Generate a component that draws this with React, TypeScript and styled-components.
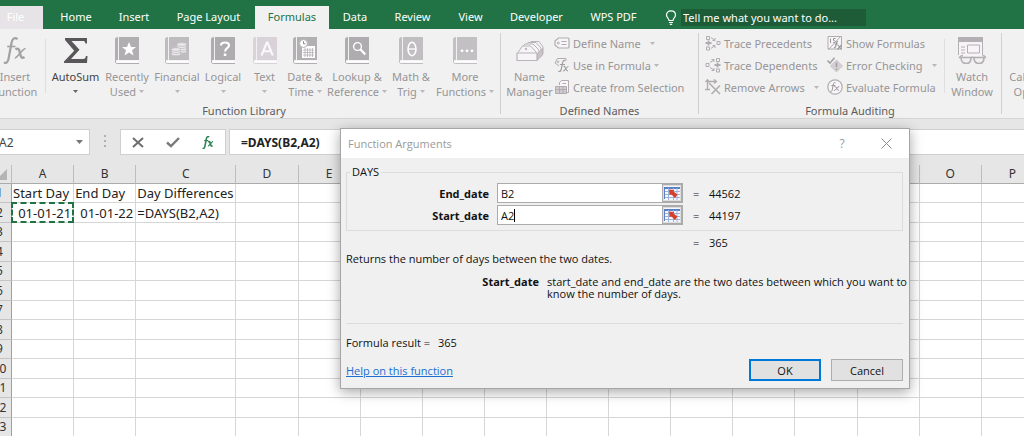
import React from "react";
import styled, { createGlobalStyle } from "styled-components";

const UI_FONT = '"Noto Sans", "Open Sans", sans-serif';
const DIALOG_FONT = '"Open Sans", "Noto Sans", sans-serif';

const GlobalStyle = createGlobalStyle`
  *, *::before, *::after { box-sizing: border-box; }
  body {
    margin: 0;
    overflow: hidden;
    background: #e6e6e6;
    font-family: ${UI_FONT};
    font-size: 11px;
  }
  button, input { font: inherit; color: inherit; margin: 0; padding: 0; border: 0; background: none; }
`;

/* The window is scrolled a little past its left edge. */
const Shell = styled.div`
  position: relative;
  margin-left: -12px;
  min-height: 100vh;
  display: flex;
  flex-direction: column;
`;

/* ---------- Tab bar ---------- */

const TabBar = styled.nav`
  display: flex;
  align-items: flex-end;
  height: 29px;
  background: #217346;
`;

const Tab = styled.button<{ $width: number; $kind?: "file" | "active" }>`
  flex: none;
  width: ${(p) => p.$width}px;
  height: 23px;
  && { padding-bottom: 2px; }
  line-height: 21px;
  white-space: nowrap;
  color: ${(p) => (p.$kind === "active" ? "#217346" : "#fff")};
  && {
    background: ${(p) =>
      p.$kind === "active" ? "#f1f1f1" : p.$kind === "file" ? "#e6e4e6" : "transparent"};
    margin-right: ${(p) => (p.$kind === "file" ? 3 : 0)}px;
  }
`;

const TellMe = styled.label`
  display: flex;
  align-items: center;
  gap: 4px;
  height: 23px;
  padding-left: 14px;
  color: #fff;
`;

const TellMeInput = styled.input`
  width: 185px;
  height: 17px;
  && { padding-left: 2px; background: #1e5c38; }
  outline: none;
  &::placeholder { color: #fff; opacity: 1; }
`;

/* ---------- Ribbon ---------- */

const Ribbon = styled.div`
  display: flex;
  height: 90px;
  background: #f1f1f1;
  border-bottom: 1px solid #d5d5d5;
  overflow: hidden;
`;

const Group = styled.section<{ $width: number }>`
  flex: none;
  width: ${(p) => p.$width}px;
  display: flex;
  flex-direction: column;
`;

const GroupBody = styled.div<{ $left?: number }>`
  display: flex;
  height: 74px;
  padding-left: ${(p) => p.$left ?? 0}px;
`;

const GroupLabel = styled.div`
  height: 15px;
  line-height: 15px;
  text-align: center;
  color: #5c5c5c;
`;

const Divider = styled.div<{ $inner?: boolean; $gap?: number }>`
  flex: none;
  width: 1px;
  margin: ${(p) => (p.$inner ? "10px" : "4px")} ${(p) => p.$gap ?? 0}px
    ${(p) => (p.$inner ? "10px" : "4px")};
  background: ${(p) => (p.$inner ? "#dedede" : "#d0d0d0")};
`;

const Big = styled.button<{ $width: number; $on?: boolean }>`
  flex: none;
  width: ${(p) => p.$width}px;
  display: flex;
  flex-direction: column;
  align-items: center;
  && { padding-top: 8px; }
  color: ${(p) => (p.$on ? "#444" : "#979597")};
  line-height: 15px;
  white-space: nowrap;
  svg.icon { flex: none; margin-bottom: 5px; }
`;

const Line = styled.span`
  display: flex;
  align-items: center;
  justify-content: center;
  gap: 3px;
  height: 15px;
`;

const SmallColumn = styled.div<{ $width: number }>`
  flex: none;
  width: ${(p) => p.$width}px;
  display: flex;
  flex-direction: column;
  padding-top: 3px;
`;

const Small = styled.button`
  display: flex;
  align-items: center;
  height: 22px;
  gap: 3px;
  color: #979597;
  white-space: nowrap;
`;

const CaretSvg = styled.svg<{ $gap?: number }>`
  flex: none;
  margin-left: ${(p) => p.$gap ?? 0}px;
`;

const Caret = ({ color = "#b9b7b9", gap }: { color?: string; gap?: number }) => (
  <CaretSvg $gap={gap} width="5" height="3" viewBox="0 0 5 3">
    <path d="M0 0H5L2.5 3Z" fill={color} />
  </CaretSvg>
);

/* ---------- Icons ---------- */

const Book = ({ color, children }: { color: string; children: React.ReactNode }) => (
  <svg className="icon" width="24" height="27" viewBox="0 0 24 27" fill="none">
    <path d="M3 0C1 0 0 1 0 2.5V24.500C0 23.500 1 22.800 3 22.800Z" fill={color} />
    <path d="M4 0H24V23H4Z" fill={color} />
    <path d="M1 25.200C1 24 2 23.800 3.500 23.800H23.500V25.600H1.500Z" fill="#fff" />
    <path d="M.5 23V25C.5 26 1.200 26.500 2.200 26.500H24" stroke={color} />
    {children}
  </svg>
);

const StarBook = () => (
  <Book color="#b1aeb1">
    <path d="M14 5L16 10H21L17 13.300L18.500 18.500L14 15.400L9.500 18.500L11 13.300L7 10H12Z" fill="#fff" />
  </Book>
);

const CoinsBook = () => (
  <Book color="#bfbcbf">
    <g fill="#ebe8eb" stroke="#bfbcbf" strokeWidth=".8">
      <path d="M12 7.500V15C12 16.500 21.500 16.500 21.500 15V7.500Z" />
      <ellipse cx="16.750" cy="7.500" rx="4.750" ry="1.900" />
      <path d="M12 10C13 12 20.500 12 21.500 10M12 12.500C13 14.500 20.500 14.500 21.500 12.500" fill="none" />
      <path d="M6.500 12.500V17.500C6.500 19.200 15.500 19.200 15.500 17.500V12.500Z" />
      <ellipse cx="11" cy="12.500" rx="4.500" ry="1.900" />
      <path d="M6.500 15C7.500 17 14.500 17 15.500 15" fill="none" />
    </g>
  </Book>
);

const QuestionBook = () => (
  <Book color="#aeacae">
    <path d="M10 8.500C10 4.500 18 4.500 18 8.500C18 11.200 14 11 14 14.500" stroke="#fff" strokeWidth="2.200" />
    <path d="M12.800 16.500H15.300V19H12.800Z" fill="#fff" />
  </Book>
);

const LetterBook = () => (
  <Book color="#d9d3d9">
    <path d="M8.500 18.500L13.800 5.500H14.500L19.800 18.500M10.500 14.200H18" stroke="#fbf8fb" strokeWidth="2" />
  </Book>
);

const CalendarBook = () => (
  <Book color="#b3b0b3">
    <path d="M9 9H22V21H9Z" fill="#fff" />
    <path d="M10 13H21M10 15.500H21M10 18H21M12 11V20M14.500 11V20M17 11V20M19.500 11V20" stroke="#b3b0b3" strokeWidth=".8" />
    <circle cx="10.500" cy="6.500" r="4" fill="#fff" stroke="#b3b0b3" />
    <path d="M10.500 4.200V6.800H12.500" stroke="#8d8b8d" />
  </Book>
);

const SearchBook = () => (
  <Book color="#aeacae">
    <circle cx="12.500" cy="9.500" r="3.900" stroke="#fff" strokeWidth="1.400" />
    <path d="M15.300 12.300L20.300 17.500" stroke="#fff" strokeWidth="2.200" />
  </Book>
);

const ThetaBook = () => (
  <Book color="#c1bec1">
    <ellipse cx="13" cy="12" rx="4" ry="6.700" stroke="#fff" strokeWidth="1.500" />
    <path d="M9 12H17" stroke="#fff" strokeWidth="1.300" />
  </Book>
);

const DotsBook = () => (
  <Book color="#c3c0c3">
    <g fill="#fff">
      <circle cx="9" cy="13.800" r="1.400" />
      <circle cx="14" cy="13.800" r="1.400" />
      <circle cx="19" cy="13.800" r="1.400" />
    </g>
  </Book>
);

const FxGlyph = ({
  color,
  width,
  height,
  bold = 0,
}: {
  color: string;
  width: number;
  height: number;
  bold?: number;
}) => (
  <svg className="icon" width={width} height={height} viewBox="0 0 24 27" fill="none" stroke={color}>
    <path d="M14.500 2.200C11.500-.3 9.200 2.200 8.500 6L5.600 21.500C5 25 3 27 1 25.200" strokeWidth={2.2 + bold} />
    <path d="M4.200 9.500H12.500" strokeWidth={1.6 + bold} />
    <path d="M12.500 12.500C15 10.500 16 12 16.800 15.500C17.800 20 18.500 22 21.500 20" strokeWidth={2.4 + bold} />
    <path d="M22.500 11.800C19.500 11 14.500 21.500 11.800 21" strokeWidth={1.6 + bold} />
  </svg>
);

const Sigma = () => (
  <svg className="icon" width="24" height="27" viewBox="0 0 24 27">
    <path d="M1 1H23V6.500H21.500C21 4.500 20.500 4 18.500 4H7.500L15.500 12.800L7 22H19C21 22 21.500 21 22 19H23.500L23 26H0V24.500L10.200 13.700L1 3Z" fill="#595759" />
  </svg>
);

const NameManagerIcon = () => (
  <svg className="icon" width="28" height="27" viewBox="0 0 28 27" fill="#f7f4f7" stroke="#b8b4b8">
    <path d="M11 9L15 4.500H23L27 10V17L24 20" />
    <path d="M8 10L12 5.500H20L25 11V19" />
    <path d="M5 11L9 7H17L23 13V20" />
    <path d="M2 15.500L6.500 9H14.500L20.500 15.500" />
    <circle cx="10" cy="12" r=".8" fill="#b5b1b5" />
    <path d="M1 16H21V23.500H1Z" strokeWidth="1.200" />
    <path d="M21.500 16.500L26.500 11.500V18L21.500 23Z" fill="#c8c4c8" />
  </svg>
);

const WatchIcon = () => (
  <svg className="icon" width="28" height="27" viewBox="0 0 28 27" fill="none" stroke="#b3afb3">
    <path d="M1 1H24V19H1Z" fill="#f7f3f7" stroke="none" />
    <path d="M.5 5V18M24.500 5V18" />
    <path d="M0 0H25V5H0Z" fill="#b3afb3" stroke="none" />
    <path d="M9.500 8H21.500V16H9.500ZM3 10H7M3 13H7M3 16H7" />
    <path d="M5 18.500C2.500 18.500 2 20 1 21M24.500 18.500C27 18.500 27 20 28 21" strokeWidth="1.600" />
    <path d="M3 20.500H13C13 24.500 11.500 26.500 8.500 26.500C5 26.500 3 24.500 3 20.500ZM16 20.500H26C26 24.500 24 26.500 21 26.500C17.500 26.500 16 24.500 16 20.500Z" fill="#f1f1f1" strokeWidth="1.600" />
    <path d="M12.500 21Q14.500 19.500 16.500 21" strokeWidth="1.600" />
  </svg>
);

const SmallSvg = ({ children }: { children: React.ReactNode }) => (
  <svg width="16" height="16" viewBox="0 0 16 16" fill="none" stroke="#b0acb0">
    {children}
  </svg>
);

const TagIcon = () => (
  <SmallSvg>
    <path d="M4.500 3H14C14.800 3 15 3.300 15 4V12C15 12.700 14.800 13 14 13H4.500L1 10V6Z" fill="#f8f5f8" strokeWidth="1.200" />
    <circle cx="4.300" cy="8" r="1" />
    <path d="M7.500 6.500H12.500M7.500 9.500H12.500" />
  </SmallSvg>
);

const TagFxIcon = () => (
  <SmallSvg>
    <path d="M5 9L1 6L3.500 1.500H12V3.500" />
    <circle cx="4" cy="4.800" r=".8" />
    <path d="M11.500 4C9.500 2.500 8.800 4.500 8.500 6.500L7.200 12.500C6.800 14.500 5.500 15 4.500 14M5.800 7.500H11" stroke="#a19da1" strokeWidth="1.200" />
    <path d="M9.500 9.500C12 8.500 11.500 14.500 14 13.800M14.500 9.500C12.500 9 11 14.500 9 14" stroke="#a19da1" strokeWidth="1.100" />
  </SmallSvg>
);

const SelectionIcon = () => (
  <SmallSvg>
    <path d="M5.500 6V3.500L7.500 1.500H14.500V13.500H12" fill="#f8f5f8" />
    <path d="M8.500 4.500H12" />
    <path d="M1.500 7.500H12.500V14.500H1.500Z" fill="#cfcbcf" />
    <path d="M1.500 10.500H12.500M5.500 7.500V14.500M9 7.500V14.500" />
  </SmallSvg>
);

const PrecedentsIcon = () => (
  <SmallSvg>
    <path d="M1.500 1.500H4.500V4.500H1.500ZM1.500 12H4.500V15H1.500ZM12 6.500H15V9.500H12Z" />
    <path d="M.5 8H6.500M3.500 5.500V10.500" strokeWidth="1.800" />
    <path d="M6 2.500L10 5.500M10 3V5.500H7.500M6 13.500L10 10.500M7.500 10.500H10V13" />
  </SmallSvg>
);

const DependentsIcon = () => (
  <SmallSvg>
    <path d="M11.500 1.500H14.500V4.500H11.500ZM11.500 12H14.500V15H11.500ZM1 6.500H4V9.500H1Z" />
    <path d="M9.500 8H15.500M12.500 5.500V10.500" strokeWidth="1.800" />
    <path d="M5 5.500L9 3M6.500 2.500H9V5M5 10.500L9 13M9 11V13.500H6.500" />
  </SmallSvg>
);

const RemoveArrowsIcon = () => (
  <SmallSvg>
    <path d="M2.500 0V11M.5 3L2.500 .8L4.500 3M0 10.500H5M3 2.500H11M9 .5L11.500 2.500L9 4.500" strokeWidth="1.300" />
    <path d="M4 4L15 15M15 6.500L6.500 15" strokeWidth="1.600" />
  </SmallSvg>
);

const ShowFormulasIcon = () => (
  <SmallSvg>
    <path d="M1 1.500H14.500V14H1Z" fill="#f8f5f8" />
    <path d="M14 1L1.500 14.500" />
    <path d="M3.500 3.500V8M8.500 3.500H6.500V5.500C9 5.500 9 8 6.200 7.500" stroke="#9a969a" />
    <path d="M11 6.500C9.500 6 9.500 8 9 10C8.500 12 8 13 7 12.500M7.800 9H11M11 10L14.500 14.500M14.500 10L10.500 14.500" stroke="#9a969a" strokeWidth="1.200" />
  </SmallSvg>
);

const ErrorCheckIcon = () => (
  <SmallSvg>
    <path d="M9.500 3L15.500 9L9.500 15L3.500 9Z" fill="#d3cfd3" stroke="#cbc7cb" />
    <path d="M9.500 5.500V10M9.500 11.500V13" stroke="#a39fa3" strokeWidth="1.600" />
    <path d="M.5 3.500L3 6L7.500 .8" stroke="#a5a1a5" strokeWidth="1.600" />
  </SmallSvg>
);

const EvaluateIcon = () => (
  <SmallSvg>
    <circle cx="8" cy="8" r="7.200" fill="#f8f5f8" strokeWidth="1.200" />
    <path d="M8.500 3.800C7 2.800 6.500 4.500 6.200 6L5.200 11C5 12.500 4 12.800 3.300 12.200M4.300 6.500H8.300" stroke="#9a969a" />
    <path d="M7.500 7.500C10 7 9.500 12 11.800 11.300M12.300 7.500C10.500 7.200 9 11.800 7 11.500" stroke="#9a969a" />
  </SmallSvg>
);

const BulbIcon = () => (
  <svg width="12" height="15" viewBox="0 0 12 15" fill="none" stroke="#fff" strokeWidth="1.200">
    <path d="M4 10.500C4 8.500 1.500 7.800 1.500 5C1.500 -.5 10.500 -.5 10.500 5C10.500 7.800 8 8.500 8 10.500ZM4 12.500H8M4.800 14.300H7.200" />
  </svg>
);

/* ---------- Formula bar ---------- */

const FormulaBar = styled.div`
  display: flex;
  height: 46px;
  padding-top: 10px;
`;

const barBox = `
  display: flex;
  align-items: center;
  height: 26px;
  background: #fff;
  border: 1px solid #cfcfcf;
`;

const NameBox = styled.div`
  ${barBox}
  flex: none;
  width: 102px;
  padding: 0 6px 0 10px;
`;

const NameInput = styled.input`
  && { font-size: 12px; color: #444; }
  flex: 1;
  min-width: 0;
  outline: none;
`;

const Grip = styled.div`
  flex: none;
  width: 2px;
  margin: 6px 14px 10px;
  height: 13px;
  background: repeating-linear-gradient(#b0b0b0 0 2px, transparent 2px 5px);
`;

const EditButtons = styled.div`
  ${barBox}
  flex: none;
  width: 106px;
`;

const EditButton = styled.button`
  flex: 1;
  height: 24px;
  display: flex;
  align-items: center;
  justify-content: center;
`;

const FormulaInput = styled.input`
  && {
    ${barBox}
    flex: 1;
    min-width: 0;
    margin-left: 3px;
    border-right: 0;
    padding-left: 11px;
    font-size: 12px;
    font-weight: 700;
    color: #222;
    outline: none;
  }
`;

/* ---------- Sheet ---------- */

const SheetArea = styled.div`
  overflow: hidden;
  flex: 1;
`;

const Sheet = styled.table`
  table-layout: fixed;
  width: 1056px;
  border-collapse: separate;
  border-spacing: 0;
  background: #fff;
  font-size: 13px;
  color: #222;
  tbody tr { height: 19px; }
  tbody tr:nth-child(even) { height: 20px; }
`;

const ColHead = styled.th`
  height: 19px;
  padding: 0;
  background: #e6e6e6;
  border-right: 1px solid #bdbdbd;
  border-bottom: 1px solid #ababab;
  font-size: 12px;
  font-weight: 400;
  line-height: 18px;
  color: #333;
`;

const Corner = styled.td`
  padding: 0 4px 3px 0;
  background: #e6e6e6;
  border-right: 1px solid #bdbdbd;
  border-bottom: 1px solid #ababab;
  text-align: right;
  vertical-align: bottom;
  line-height: 0;
`;

const RowHead = styled.th`
  padding: 0;
  background: #e6e6e6;
  border-right: 1px solid #9f9f9f;
  border-bottom: 1px solid #c4c4c4;
  font-size: 12px;
  font-weight: 400;
  line-height: 18px;
  color: #333;
`;

const Cell = styled.td<{ $right?: boolean; $marked?: boolean }>`
  position: relative;
  padding: 0 2px 0 1px;
  border-right: 1px solid #d6d6d6;
  border-bottom: 1px solid #d6d6d6;
  line-height: 18px;
  white-space: nowrap;
  text-align: ${(p) => (p.$right ? "right" : "left")};
  ${(p) =>
    p.$marked &&
    `&::after {
      content: "";
      position: absolute;
      inset: -1px;
      border: 2px dashed #217346;
    }`}
`;

/* ---------- Dialog ---------- */

const Dialog = styled.div`
  position: absolute;
  left: 340px;
  top: 128px;
  width: 570px;
  background: #f0f0f0;
  border: 1px solid #a6a6a6;
  box-shadow: 0 3px 12px rgba(0, 0, 0, 0.35);
  color: #111;
  font-family: ${DIALOG_FONT};
  font-size: 11px;
`;

const TitleBar = styled.header`
  display: flex;
  align-items: center;
  height: 29px;
  padding: 0 17px 0 7px;
  background: #fff;
  color: #9a9a9a;
`;

const Title = styled.h1`
  flex: 1;
  margin: 0;
  font-size: 11px;
  font-weight: 400;
`;

const TitleButton = styled.button`
  display: flex;
  align-items: center;
  justify-content: center;
  width: 12px;
  height: 20px;
  && { margin-left: 32px; font-size: 12px; }
`;

const DialogBody = styled.div`
  padding: 7px 6px 7px 5px;
`;

const Args = styled.fieldset`
  margin: 0;
  padding: 4px 0;
  height: 66px;
  border: 1px solid #dcdcdc;
  min-width: 0;
`;

const Legend = styled.legend`
  margin-left: 3px;
  padding: 0 2px;
  line-height: 14px;
`;

const ArgRow = styled.div`
  display: grid;
  grid-template-columns: 142px 186px 10px 1fr;
  column-gap: 8px;
  align-items: center;
  height: 20px;
  margin-bottom: 2px;
`;

const ArgLabel = styled.label`
  text-align: right;
  font-weight: 700;
`;

const ArgField = styled.div`
  display: flex;
  align-items: center;
  height: 20px;
  padding-left: 3px;
  background: #fff;
  border: 1px solid #ababab;
`;

const ArgInput = styled.input<{ $fit?: boolean }>`
  ${(p) => (p.$fit ? "field-sizing: content;" : "flex: 1;")}
  min-width: 0;
  outline: none;
`;

const TextCursor = styled.span`
  width: 1px;
  height: 13px;
  background: #000;
`;

const PickButton = styled.button`
  display: flex;
  align-items: center;
  justify-content: center;
  width: 20px;
  height: 18px;
  && { margin-left: auto; background: #dedede; border: 1px solid #ababab; }
`;

const Equals = styled.span`
  padding-left: 2px;
`;

const Total = styled(ArgRow)`
  height: 18px;
  margin: 2px 0 0 1px;
`;

const Summary = styled.p`
  margin: 0;
  line-height: 15px;
`;

const ArgHelp = styled.dl`
  display: grid;
  grid-template-columns: 193px 1fr;
  column-gap: 8px;
  margin: 10px 0 0;
  padding-bottom: 23px;
  border-bottom: 1px solid #dcdcdc;
  line-height: 12px;
  dt { text-align: right; font-weight: 700; }
  dd { margin: 0 -6px 0 0; }
`;

const Result = styled.p`
  display: flex;
  gap: 8px;
  margin: 11px 0 0;
  line-height: 15px;
`;

const Footer = styled.footer`
  display: flex;
  align-items: center;
  gap: 10px;
  margin-top: 9px;
`;

const HelpLink = styled.a`
  margin-right: auto;
  color: #1a6fd0;
`;

const DialogButton = styled.button<{ $primary?: boolean }>`
  width: 72px;
  height: 22px;
  && {
    background: #e1e1e1;
    border: ${(p) => (p.$primary ? "2px solid #0078d7" : "1px solid #adadad")};
  }
`;

const PickIcon = () => (
  <svg width="16" height="14" viewBox="0 0 16 14">
    <path d="M0 0H16V14H0Z" fill="#f4f7fc" />
    <path d="M0 1H16V3H0Z" fill="#5b7fc4" />
    <path d="M0 5.500H16M0 8.500H16M0 11.500H16M4.500 2V14M9.500 2V14M13 2V14" stroke="#9db3dc" />
    <path d="M0 1H1V13H0Z" fill="#5b7fc4" />
    <path d="M5 3.500L10 4L9.500 5.500L13.500 8.500L11 12L7.500 8.500L5.500 9Z" fill="#d6402a" />
  </svg>
);

/* ---------- Data ---------- */

const columns = "ABCDEFGHIJKLMNOP".split("");
const rows = Array.from({ length: 13 }, (_, i) => i + 1);

const cells: Record<string, { text: string; right?: boolean; marked?: boolean }> = {
  A1: { text: "Start Day" },
  B1: { text: "End Day" },
  C1: { text: "Day Differences" },
  A2: { text: "01-01-21", right: true, marked: true },
  B2: { text: "01-01-22", right: true },
  C2: { text: "=DAYS(B2,A2)" },
};

const tabs: { name: string; width: number; kind?: "file" | "active" }[] = [
  { name: "File", width: 55, kind: "file" },
  { name: "Home", width: 60 },
  { name: "Insert", width: 56 },
  { name: "Page Layout", width: 93 },
  { name: "Formulas", width: 74, kind: "active" },
  { name: "Data", width: 52 },
  { name: "Review", width: 63 },
  { name: "View", width: 53 },
  { name: "Developer", width: 79 },
  { name: "WPS PDF", width: 75 },
];

const library = [
  { icon: <StarBook />, top: "Recently", bottom: "Used", width: 50 },
  { icon: <CoinsBook />, top: "Financial", bottom: "", width: 50 },
  { icon: <QuestionBook />, top: "Logical", bottom: "", width: 42 },
  { icon: <LetterBook />, top: "Text", bottom: "", width: 41 },
  { icon: <CalendarBook />, top: "Date &", bottom: "Time", width: 40 },
  { icon: <SearchBook />, top: "Lookup &", bottom: "Reference", width: 64 },
  { icon: <ThetaBook />, top: "Math &", bottom: "Trig", width: 44 },
  { icon: <DotsBook />, top: "More", bottom: "Functions", width: 64 },
];

export default function App() {
  return (
    <>
      <GlobalStyle />
      <Shell>
        <TabBar>
          {tabs.map((t) => (
            <Tab key={t.name} $width={t.width} $kind={t.kind}>
              {t.name}
            </Tab>
          ))}
          <TellMe>
            <BulbIcon />
            <TellMeInput aria-label="Tell me" placeholder="Tell me what you want to do..." />
          </TellMe>
        </TabBar>

        <Ribbon>
          <Group $width={512}>
            <GroupBody>
              <Big $width={54}>
                <FxGlyph color="#a3a1a3" width={24} height={27} />
                <Line>Insert</Line>
                <Line>Function</Line>
              </Big>
              <Divider $inner $gap={3} />
              <Big $width={53} $on>
                <Sigma />
                <Line>AutoSum</Line>
                <Line>
                  <Caret color="#666" />
                </Line>
              </Big>
              {library.map((b) => (
                <Big key={b.top} $width={b.width}>
                  {b.icon}
                  <Line>{b.top}</Line>
                  <Line>
                    {b.bottom}
                    <Caret />
                  </Line>
                </Big>
              ))}
            </GroupBody>
            <GroupLabel>Function Library</GroupLabel>
          </Group>
          <Divider />
          <Group $width={197}>
            <GroupBody $left={4}>
              <Big $width={49}>
                <NameManagerIcon />
                <Line>Name</Line>
                <Line>Manager</Line>
              </Big>
              <SmallColumn $width={140}>
                <Small>
                  <TagIcon />
                  Define Name
                  <Caret gap={6} />
                </Small>
                <Small>
                  <TagFxIcon />
                  Use in Formula
                  <Caret />
                </Small>
                <Small>
                  <SelectionIcon />
                  Create from Selection
                </Small>
              </SmallColumn>
            </GroupBody>
            <GroupLabel>Defined Names</GroupLabel>
          </Group>
          <Divider />
          <Group $width={302}>
            <GroupBody $left={6}>
              <SmallColumn $width={122}>
                <Small>
                  <PrecedentsIcon />
                  Trace Precedents
                </Small>
                <Small>
                  <DependentsIcon />
                  Trace Dependents
                </Small>
                <Small>
                  <RemoveArrowsIcon />
                  Remove Arrows
                  <Caret gap={6} />
                </Small>
              </SmallColumn>
              <SmallColumn $width={117}>
                <Small>
                  <ShowFormulasIcon />
                  Show Formulas
                </Small>
                <Small>
                  <ErrorCheckIcon />
                  Error Checking
                  <Caret gap={6} />
                </Small>
                <Small>
                  <EvaluateIcon />
                  Evaluate Formula
                </Small>
              </SmallColumn>
              <Divider $inner />
              <Big $width={54}>
                <WatchIcon />
                <Line>Watch</Line>
                <Line>Window</Line>
              </Big>
            </GroupBody>
            <GroupLabel>Formula Auditing</GroupLabel>
          </Group>
          <Divider />
          <Group $width={80}>
            <GroupBody $left={4}>
              <Big $width={64}>
                <svg className="icon" width="24" height="27" />
                <Line>Calculation</Line>
                <Line>
                  Options
                  <Caret />
                </Line>
              </Big>
            </GroupBody>
          </Group>
        </Ribbon>

        <FormulaBar>
          <NameBox>
            <NameInput aria-label="Name box" defaultValue="A2" />
            <svg width="7" height="4" viewBox="0 0 7 4">
              <path d="M0 0H7L3.500 4Z" fill="#777" />
            </svg>
          </NameBox>
          <Grip />
          <EditButtons>
            <EditButton aria-label="Cancel entry">
              <svg width="12" height="11" viewBox="0 0 12 11" stroke="#6e6e6e" strokeWidth="2">
                <path d="M1 1L11 10M11 1L1 10" />
              </svg>
            </EditButton>
            <EditButton aria-label="Enter">
              <svg width="14" height="11" viewBox="0 0 14 11" fill="none" stroke="#7a7a7a" strokeWidth="2.400">
                <path d="M1 5.500L5 9.200L13 1" />
              </svg>
            </EditButton>
            <EditButton aria-label="Insert function">
              <FxGlyph color="#2f8353" width={12} height={13} bold={1} />
            </EditButton>
          </EditButtons>
          <FormulaInput aria-label="Formula" defaultValue="=DAYS(B2,A2)" />
        </FormulaBar>

        <SheetArea>
          <Sheet>
            <colgroup>
              <col width={24} />
              {columns.map((c) => (
                <col key={c} width={c === "C" ? 100 : 62} />
              ))}
            </colgroup>
            <thead>
              <tr>
                <Corner>
                  <svg width="11" height="11" viewBox="0 0 11 11">
                    <path d="M11 0V11H0Z" fill="#b4b4b4" />
                  </svg>
                </Corner>
                {columns.map((c) => (
                  <ColHead key={c} scope="col">
                    {c}
                  </ColHead>
                ))}
              </tr>
            </thead>
            <tbody>
              {rows.map((r) => (
                <tr key={r}>
                  <RowHead scope="row">{r}</RowHead>
                  {columns.map((c) => {
                    const cell = cells[c + r];
                    return (
                      <Cell key={c} $right={cell?.right} $marked={cell?.marked}>
                        {cell?.text}
                      </Cell>
                    );
                  })}
                </tr>
              ))}
            </tbody>
          </Sheet>
        </SheetArea>
      </Shell>

      <Dialog role="dialog" aria-labelledby="dialog-title">
        <TitleBar>
          <Title id="dialog-title">Function Arguments</Title>
          <TitleButton aria-label="Help">?</TitleButton>
          <TitleButton aria-label="Close">
            <svg width="11" height="11" viewBox="0 0 11 11" stroke="#8c8c8c">
              <path d="M.5 .5L10.500 10.500M10.500 .5L.5 10.500" />
            </svg>
          </TitleButton>
        </TitleBar>
        <DialogBody>
          <Args>
            <Legend>DAYS</Legend>
            <ArgRow>
              <ArgLabel htmlFor="end-date">End_date</ArgLabel>
              <ArgField>
                <ArgInput id="end-date" defaultValue="B2" />
                <PickButton aria-label="Pick end date cell">
                  <PickIcon />
                </PickButton>
              </ArgField>
              <Equals>=</Equals>
              <span>44562</span>
            </ArgRow>
            <ArgRow>
              <ArgLabel htmlFor="start-date">Start_date</ArgLabel>
              <ArgField>
                <ArgInput id="start-date" defaultValue="A2" $fit />
                <TextCursor />
                <PickButton aria-label="Pick start date cell">
                  <PickIcon />
                </PickButton>
              </ArgField>
              <Equals>=</Equals>
              <span>44197</span>
            </ArgRow>
          </Args>
          <Total>
            <span />
            <span />
            <Equals>=</Equals>
            <span>365</span>
          </Total>
          <Summary>Returns the number of days between the two dates.</Summary>
          <ArgHelp>
            <dt>Start_date</dt>
            <dd>start_date and end_date are the two dates between which you want to know the number of days.</dd>
          </ArgHelp>
          <Result>
            <span>Formula result =</span>
            <span>365</span>
          </Result>
          <Footer>
            <HelpLink href="#help">Help on this function</HelpLink>
            <DialogButton $primary>OK</DialogButton>
            <DialogButton>Cancel</DialogButton>
          </Footer>
        </DialogBody>
      </Dialog>
    </>
  );
}
